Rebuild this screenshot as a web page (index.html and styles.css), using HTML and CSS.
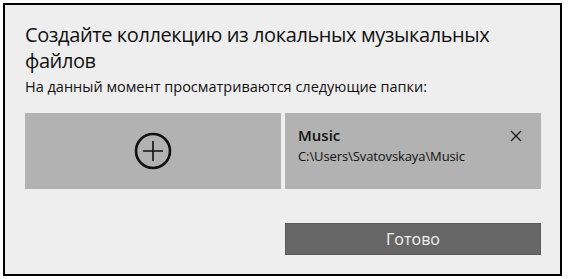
FILE: index.html
```html
<!DOCTYPE html>
<html lang="ru">
<head>
    <meta charset="UTF-8">
    <title>Музыка — папки</title>
    <link rel="stylesheet" href="styles.css">
</head>
<body>
    <div class="dialog">
        <h1 class="dialog-title">Создайте коллекцию из локальных музыкальных файлов</h1>
        <p class="dialog-subtitle">На данный момент просматриваются следующие папки:</p>

        <div class="folders">
            <button class="folder-add" aria-label="Добавить папку">
                <svg width="38" height="38" viewBox="0 0 38 38">
                    <circle cx="19" cy="19" r="17" fill="none" stroke="#111" stroke-width="2.6"/>
                    <path d="M19 9 V29 M9 19 H29" stroke="#111" stroke-width="1.6"/>
                </svg>
            </button>
            <div class="folder-card">
                <div class="folder-info">
                    <div class="folder-name">Music</div>
                    <div class="folder-path">C:\Users\Svatovskaya\Music</div>
                </div>
                <svg class="folder-remove" width="12" height="12" viewBox="0 0 12 12">
                    <path d="M1 1 L11 11 M11 1 L1 11" stroke="#1a1a1a" stroke-width="1.3"/>
                </svg>
            </div>
        </div>

        <div class="dialog-actions">
            <button class="btn-done">Готово</button>
        </div>
    </div>
</body>
</html>
```

FILE: styles.css
```css
* {
    margin: 0;
    padding: 0;
    box-sizing: border-box;
}

body {
    font-family: "Open Sans", "Noto Sans", sans-serif;
    background: #ffffff;
    padding: 3px;
    color: #111;
}

.dialog {
    width: 559px;
    height: 273px;
    border: 2px solid #000;
    background: #eeeeee;
    padding: 17px 19px 0 20px;
}

.dialog-title {
    font-size: 20px;
    font-weight: 400;
    line-height: 26px;
    letter-spacing: -0.4px;
    color: #111;
    width: 490px;
}

.dialog-subtitle {
    font-size: 14.5px;
    line-height: 21px;
    color: #111;
    margin-top: 2px;
}

.folders {
    display: grid;
    grid-template-columns: 1fr 1fr;
    gap: 4px;
    margin-top: 16px;
    height: 76px;
}

.folder-add {
    background: #b2b2b2;
    border: none;
    display: flex;
    align-items: center;
    justify-content: center;
}

.folder-card {
    background: #b2b2b2;
    display: flex;
    justify-content: space-between;
    align-items: flex-start;
    padding: 12px 19px 0 13px;
}

.folder-name {
    font-size: 15px;
    font-weight: 600;
    line-height: 21px;
}

.folder-path {
    font-size: 13px;
    line-height: 20px;
    letter-spacing: -0.1px;
}

.folder-remove {
    margin-top: 5px;
}

.dialog-actions {
    display: flex;
    justify-content: flex-end;
    margin-top: 34px;
}

.btn-done {
    width: 256px;
    height: 32px;
    background: #666666;
    border: 1px solid #5a5a5a;
    color: #f2f2f2;
    font-family: inherit;
    font-size: 16px;
}
```
